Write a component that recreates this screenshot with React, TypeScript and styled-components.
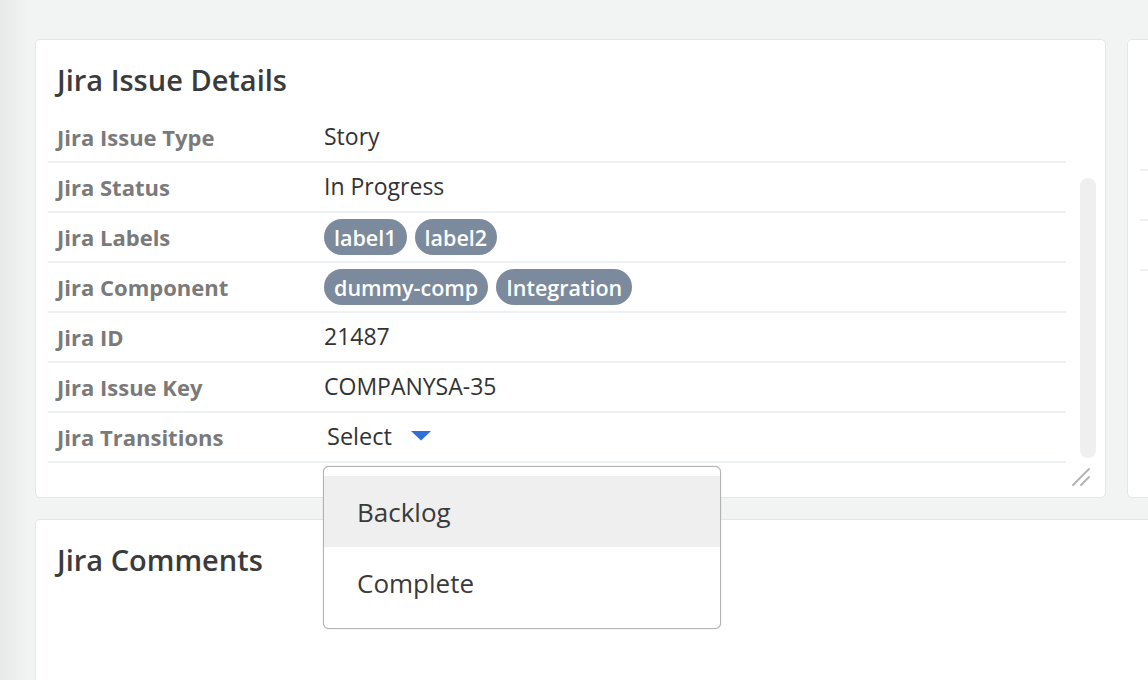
import React from "react";
import styled, { createGlobalStyle } from "styled-components";

const Global = createGlobalStyle`
  html, body { margin: 0; padding: 0; }
  body {
    font-family: "Open Sans", "Liberation Sans", sans-serif;
    background: #f2f3f3;
  }
`;

const Page = styled.div`
  width: 1148px;
  height: 680px;
  overflow: hidden;
  box-sizing: border-box;
  padding: 39px 0 0 35px;
  background: linear-gradient(to right, #e8e9e9 0px, #f2f3f3 30px);
  display: flex;
  flex-direction: column;
  gap: 21px;
`;

const TopRow = styled.div`
  display: flex;
  gap: 21px;
`;

const Card = styled.section<{ $w?: number; $h?: number }>`
  position: relative;
  flex: none;
  width: ${(p) => (p.$w ? `${p.$w}px` : "1200px")};
  height: ${(p) => (p.$h ? `${p.$h}px` : "auto")};
  box-sizing: border-box;
  background: #ffffff;
  border: 1px solid #e5e7e7;
  border-radius: 5px;
  display: flex;
  flex-direction: column;
`;

const Title = styled.h2`
  margin: 0;
  padding: 22px 0 0 21px;
  height: 36px;
  line-height: 36px;
  font-size: 29px;
  font-weight: 600;
  color: #3b3b3b;
`;

const Body = styled.div`
  display: flex;
  margin-top: 15px;
  padding-left: 12px;
`;

const Rows = styled.div`
  width: 1018px;
  display: flex;
  flex-direction: column;
`;

const Row = styled.div`
  position: relative;
  height: 50px;
  box-sizing: border-box;
  border-bottom: 2px solid #eef1f4;
  display: flex;
  align-items: center;
`;

const Label = styled.div`
  width: 276px;
  padding-left: 9px;
  box-sizing: border-box;
  font-size: 22px;
  font-weight: 700;
  color: #7a7a7a;
`;

const Value = styled.div`
  position: relative;
  display: flex;
  align-items: center;
  gap: 8px;
  font-size: 23px;
  color: #333333;
  margin-top: -2px;
`;

const Chip = styled.span`
  display: inline-flex;
  align-items: center;
  height: 36px;
  padding: 0 10px;
  border-radius: 18px;
  background: #7b8a9d;
  color: #ffffff;
  font-size: 21.5px;
  font-weight: 600;
  margin-top: 2px;
`;

const SelectBox = styled.div`
  display: flex;
  align-items: center;
  gap: 19px;
  padding-left: 3px;
  font-size: 23.5px;
  color: #333333;
  cursor: pointer;
`;

const Menu = styled.ul`
  position: absolute;
  left: -1px;
  top: 46px;
  z-index: 5;
  width: 398px;
  margin: 0;
  padding: 9px 0 10px;
  box-sizing: border-box;
  list-style: none;
  background: #ffffff;
  border: 1px solid #b3b3b3;
  border-radius: 6px;
  box-shadow: 0 0 1px rgba(0, 0, 0, 0.35);
`;

const MenuItem = styled.li<{ $active?: boolean }>`
  height: 71px;
  display: flex;
  align-items: center;
  padding-left: 33px;
  font-size: 26px;
  color: #3a3a3a;
  background: ${(p) => (p.$active ? "#efefef" : "transparent")};
`;

const Scrollbar = styled.div`
  width: 16px;
  margin-left: 14px;
  padding-top: 65px;
  display: flex;
  flex-direction: column;
  align-items: stretch;
`;

const Thumb = styled.div`
  height: 280px;
  border-radius: 8px;
  background: #efefef;
`;

const Resize = styled.svg`
  position: absolute;
  right: 14px;
  bottom: 10px;
`;

const SideBody = styled.div`
  padding: 81px 0 0 12px;
  display: flex;
  flex-direction: column;
`;

const SideRow = styled.div`
  height: 50px;
  box-sizing: border-box;
  border-bottom: 2px solid #eef1f4;
`;

const rows: { label: string; value: React.ReactNode }[] = [
  { label: "Jira Issue Type", value: "Story" },
  { label: "Jira Status", value: "In Progress" },
  {
    label: "Jira Labels",
    value: (
      <>
        <Chip>label1</Chip>
        <Chip>label2</Chip>
      </>
    ),
  },
  {
    label: "Jira Component",
    value: (
      <>
        <Chip>dummy-comp</Chip>
        <Chip>Integration</Chip>
      </>
    ),
  },
  { label: "Jira ID", value: "21487" },
  { label: "Jira Issue Key", value: "COMPANYSA-35" },
];

export default function App() {
  return (
    <>
      <Global />
      <Page>
        <TopRow>
          <Card $w={1071} $h={459}>
            <Title>Jira Issue Details</Title>
            <Body>
              <Rows>
                {rows.map((r) => (
                  <Row key={r.label}>
                    <Label>{r.label}</Label>
                    <Value>{r.value}</Value>
                  </Row>
                ))}
                <Row>
                  <Label>Jira Transitions</Label>
                  <Value>
                    <SelectBox>
                      Select
                      <svg width="20" height="10" viewBox="0 0 20 10">
                        <path d="M0 0 H20 L10 9.5 Z" fill="#2e6fd9" />
                      </svg>
                    </SelectBox>
                    <Menu>
                      <MenuItem $active>Backlog</MenuItem>
                      <MenuItem>Complete</MenuItem>
                    </Menu>
                  </Value>
                </Row>
              </Rows>
              <Scrollbar>
                <Thumb />
              </Scrollbar>
            </Body>
            <Resize width="20" height="20" viewBox="0 0 20 20">
              <path d="M2 18 L18 2 M10 18 L18 10" stroke="#b5b5b5" strokeWidth="2" strokeLinecap="round" />
            </Resize>
          </Card>
          <Card $h={459}>
            <SideBody>
              <SideRow />
              <SideRow />
              <SideRow />
            </SideBody>
          </Card>
        </TopRow>
        <Card $w={1200} $h={300}>
          <Title>Jira Comments</Title>
        </Card>
      </Page>
    </>
  );
}
